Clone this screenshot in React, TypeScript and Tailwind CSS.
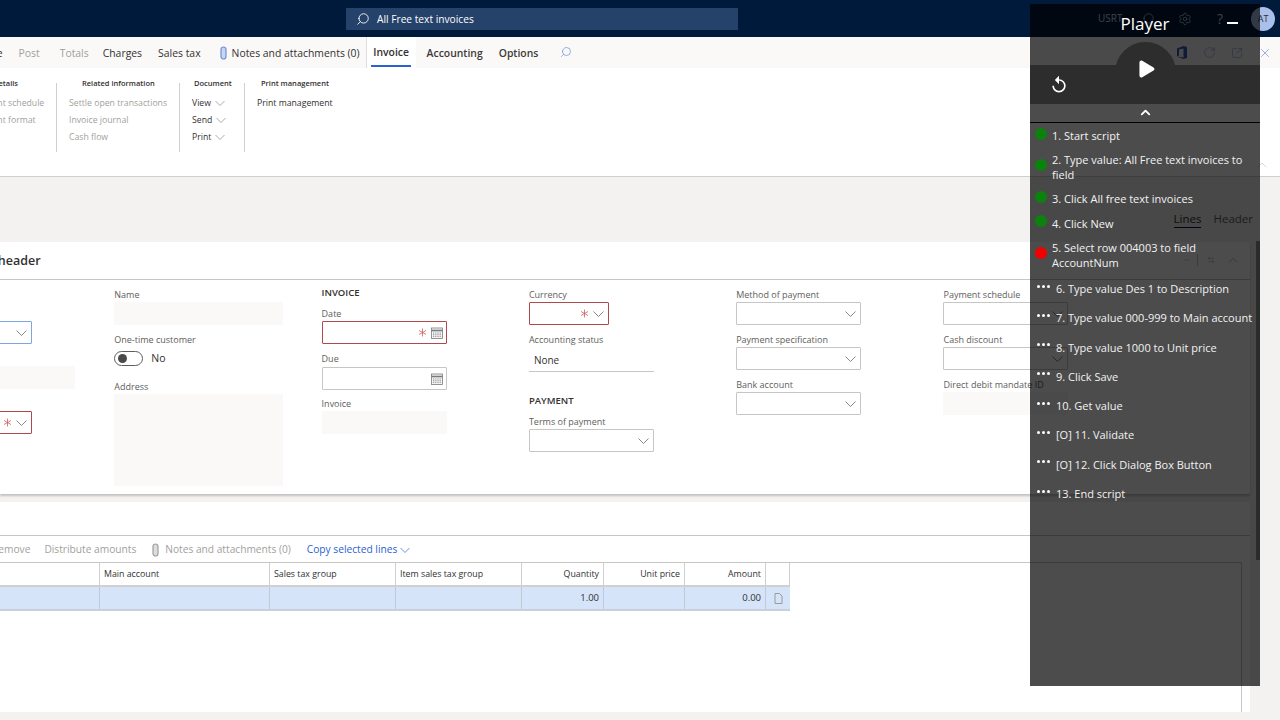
import { ArrowLeftRight, ChevronUp, Minus, Play, RotateCw, Search, Settings, SquareArrowOutUpRight, X } from "lucide-react";
import { MdReplay } from "react-icons/md";
import type { ReactNode } from "react";

const Chevron = ({ className = "text-[#6b6a68]" }: { className?: string }) => (
    <svg width="11" height="6" viewBox="0 0 11 6" fill="none" stroke="currentColor" strokeWidth="0.8" className={className}>
        <path d="M0.5 0.5l5 5 5-5" />
    </svg>
);

const SmallChevron = ({ className = "text-[#8a8886]" }: { className?: string }) => (
    <svg width="10" height="6" viewBox="0 0 10 6" fill="none" stroke="currentColor" strokeWidth="0.7" className={className}>
        <path d="M0.5 1l4.5 4.5L9.5 1" />
    </svg>
);

const Star = () => (
    <svg width="9" height="9" viewBox="0 0 9 9" fill="none" stroke="#c9605c" strokeWidth="0.8">
        <path d="M4.5 0.5v8M1 2.5l7 4M8 2.5l-7 4" />
    </svg>
);

const Clip = ({ color }: { color: string }) => (
    <svg width="7" height="14" viewBox="0 0 7 14" fill="none" stroke={color} strokeWidth="1.2">
        <rect x="1" y="1" width="5" height="12" rx="2.5" fill={color} fillOpacity="0.35" />
    </svg>
);

const CalendarIcon = () => (
    <svg width="12" height="12" viewBox="0 0 12 12" fill="none" stroke="#7a7a7a" strokeWidth="0.8">
        <rect x="0.5" y="1" width="11" height="10.5" fill="#f3f3f3" />
        <path d="M0.5 3.5h11" strokeWidth="1.6" />
        <path d="M2 6h8M2 7.7h8M2 9.4h8" strokeDasharray="1 0.8" />
    </svg>
);

const Label = ({ children }: { children?: ReactNode }) => (
    <div className="h-[15px] text-[9px] leading-[15px] whitespace-nowrap text-[#605e5c]">{children}</div>
);

const Heading = ({ children }: { children: ReactNode }) => (
    <div className="h-[19px] text-[9.5px] leading-[12px] font-semibold text-[#323130]">{children}</div>
);

const SelectBox = ({ required, width = "w-[125px]" }: { required?: boolean; width?: string }) => (
    <div className={`mb-[7px] flex h-[23px] ${width} items-center justify-end gap-[4px] rounded-[1px] border pr-[4px] ${required ? "border-[#b04a4a]" : "border-[#c8c6c4]"}`}>
        {required && <Star />}
        <Chevron />
    </div>
);

const DateBox = ({ required }: { required?: boolean }) => (
    <div className={`flex h-[23px] w-[125px] items-center justify-end gap-[4px] rounded-[1px] border pr-[3px] ${required ? "mb-[7px] border-[#b04a4a]" : "mt-[1px] mb-[6px] border-[#c8c6c4]"}`}>
        {required && <Star />}
        <CalendarIcon />
    </div>
);

const ReadOnly = ({ className }: { className: string }) => <div className={`mb-[7px] bg-[#faf9f8] ${className}`} />;

const RibbonGroup = ({ title, titleClass, children, className }: { title: string; titleClass?: string; children: ReactNode; className: string }) => (
    <div className={`h-[69px] shrink-0 border-r border-[#d2d0ce] ${className}`}>
        <div className={`-mt-[5px] h-[18px] text-[7.5px] leading-[10px] font-semibold whitespace-nowrap text-[#323130] ${titleClass ?? ""}`}>{title}</div>
        <div className="flex flex-col gap-[3px] text-[8.7px] leading-[14px] whitespace-nowrap">{children}</div>
    </div>
);

const columns = [
    { title: "Description", width: "w-[100px]", right: false },
    { title: "Main account", width: "w-[170px]", right: false },
    { title: "Sales tax group", width: "w-[126px]", right: false },
    { title: "Item sales tax group", width: "w-[126px]", right: false },
    { title: "Quantity", width: "w-[82px]", right: true, value: "1.00" },
    { title: "Unit price", width: "w-[81px]", right: true },
    { title: "Amount", width: "w-[81px]", right: true, value: "0.00" },
];

const doneSteps = [
    { text: "1. Start script", color: "bg-[#0b820b]" },
    { text: "2. Type value: All Free text invoices to field", color: "bg-[#0b820b]" },
    { text: "3. Click All free text invoices", color: "bg-[#0b820b]" },
    { text: "4. Click New", color: "bg-[#0b820b]" },
    { text: "5. Select row 004003 to field AccountNum", color: "bg-[#f00000]" },
];

const pendingSteps = [
    "6. Type value Des 1 to Description",
    "7. Type value 000-999 to Main account",
    "8. Type value 1000 to Unit price",
    "9. Click Save",
    "10. Get value",
    "[O] 11. Validate",
    "[O] 12. Click Dialog Box Button",
    "13. End script",
];

const Player = () => (
    <div className="absolute top-[4px] left-[1030px] flex h-[682px] w-[230px] flex-col bg-[rgba(0,0,0,0.7)] text-white">
        {/* title */}
        <div className="relative h-[38px] shrink-0 pt-[7px] text-center text-[17px] leading-[26px]">
            Player
            <div className="absolute top-[18px] left-[197px] h-[2px] w-[11px] bg-white" />
        </div>

        {/* transport */}
        <div className="relative mt-[23px] flex h-[39px] shrink-0 items-center bg-[#2d2d2d] pl-[19px]">
            <div className="absolute top-[-23px] left-[85px] flex h-[61px] w-[61px] items-start justify-center rounded-full bg-[#2d2d2d] pt-[18px]">
                <Play size={18} fill="white" strokeWidth={0} className="scale-[1.25]" />
            </div>
            <MdReplay size={20} className="relative mt-[1px]" />
        </div>
        <div className="flex h-[19px] shrink-0 items-center justify-center border-b border-black pb-[1px]">
            <ChevronUp size={15} strokeWidth={3} />
        </div>

        {/* steps */}
        <div className="flex flex-col pt-[5px] pr-[4px] text-[11px] leading-[15px] text-[#f2f2f2]">
            <div className="flex flex-col gap-[9.5px]">
                {doneSteps.map((step) => (
                    <div key={step.text} className="flex items-center pl-[5px] first:-mb-[1px]">
                        <div className={`h-[12px] w-[12px] shrink-0 -translate-y-[2px] rounded-full ${step.color}`} />
                        <div className="ml-[5px]">{step.text}</div>
                    </div>
                ))}
            </div>
            <div className="mt-[11px] flex flex-col gap-[14.3px]">
                {pendingSteps.map((step) => (
                    <div key={step} className="flex pl-[7px] whitespace-nowrap">
                        <div className="mt-[2px] flex h-[6px] w-[13px] shrink-0 items-center gap-[2px]">
                            <i className="h-[3px] w-[3px] rounded-full bg-white" />
                            <i className="h-[3px] w-[3px] rounded-full bg-white" />
                            <i className="h-[3px] w-[3px] rounded-full bg-white" />
                        </div>
                        <div className="ml-[6px]">{step}</div>
                    </div>
                ))}
            </div>
        </div>

        {/* scrollbar */}
        <div className="absolute top-[237px] right-0 h-[319px] w-[4px] bg-[#2b2b2b]" />
    </div>
);

export default function App() {
    return (
        <div className="relative flex h-[720px] w-[1280px] flex-col overflow-hidden bg-[#f3f2f1] font-['Open_Sans','Noto_Sans',sans-serif] text-[#323130]">
            {/* top bar */}
            <div className="flex h-[37px] shrink-0 items-center bg-[#001a3b] pl-[346px] text-white">
                <div className="mt-[8px] flex h-[22px] w-[392px] items-center gap-[7px] self-start bg-[#25426a] pl-[10px] text-[10.2px]">
                    <Search size={14} strokeWidth={1.5} className="-scale-x-100" />
                    <span className="pt-[1px]">All Free text invoices</span>
                </div>
                <div className="ml-[360px] flex items-center text-[#cfd6e2]">
                    <span className="w-[42px] text-[10px]">USRT</span>
                    <Search size={14} strokeWidth={1.2} className="ml-[1px] -scale-x-100" />
                    <Settings size={14} strokeWidth={1.2} className="ml-[23px]" />
                    <span className="ml-[25px] text-[14px]">?</span>
                    <div className="ml-[28px] flex h-[24px] w-[24px] items-center justify-center rounded-full bg-[#a9c0ea] text-[9px] text-[#323130]">AT</div>
                </div>
            </div>

            {/* action tabs */}
            <div className="flex h-[31px] shrink-0 items-stretch bg-[#faf9f8] text-[10.4px]">
                <div className="-ml-[20px] flex items-center gap-[16px] pt-[2px] whitespace-nowrap">
                    <span>Save</span>
                    <span className="text-[#a19f9d]">Post</span>
                    <span className="ml-[4px] text-[#a19f9d]">Totals</span>
                    <span className="-ml-[2px]">Charges</span>
                    <span>Sales tax</span>
                    <span className="ml-[3px] flex items-center gap-[5px]">
                        <Clip color="#6f8fd8" />
                        Notes and attachments (0)
                    </span>
                </div>
                <div className="ml-[6px] flex w-[50px] flex-col items-center border-l border-[#e1dfdd] bg-white">
                    <div className="flex flex-1 items-center pt-[3px] font-semibold">Invoice</div>
                    <div className="mb-[1px] h-[2px] w-[40px] bg-[#2a62d4]" />
                </div>
                <div className="ml-[11px] flex items-center gap-[16px] pt-[2px] font-semibold text-[#3b3a39]">
                    <span>Accounting</span>
                    <span>Options</span>
                </div>
                <Search size={12} strokeWidth={1.4} className="mt-[9px] ml-[22px] -scale-x-100 text-[#6f8fd8]" />
                <div className="ml-[576px] flex items-center text-[#5f6f8f]">
                    <svg width="10" height="8" viewBox="0 0 10 8" fill="#555"><path d="M3 0l3 4-3 4-3-4zM7 0l3 4-3 4-3-4z" /></svg>
                    <svg width="12" height="13" viewBox="0 0 12 13" className="ml-[18px]"><path d="M1 2.5L7.5 0 11 1v11l-3.5 1L1 10.5l6.5 1V2.5L3 3.5v6l-2 1z" fill="#2f5fb8" /></svg>
                    <RotateCw size={13} strokeWidth={1} className="ml-[15px] text-[#6f8fd8]" />
                    <SquareArrowOutUpRight size={12} strokeWidth={1} className="ml-[15px] text-[#6f8fd8]" />
                    <X size={14} strokeWidth={1.2} className="ml-[15px] text-[#6f8fd8]" />
                </div>
            </div>

            {/* ribbon */}
            <div className="relative flex h-[109px] shrink-0 border-b border-[#d2d0ce] bg-white pt-[15px]">
                <RibbonGroup title="Details" titleClass="-ml-[7px]" className="w-[57px]">
                    <span className="-ml-[30px] text-[#a19f9d]">Payment schedule</span>
                    <span className="-ml-[30px] text-[#a19f9d]">Payment format</span>
                </RibbonGroup>
                <RibbonGroup title="Related information" titleClass="pl-[13px]" className="w-[123px] pl-[12px]">
                    <span className="text-[#a19f9d]">Settle open transactions</span>
                    <span className="text-[#a19f9d]">Invoice journal</span>
                    <span className="text-[#a19f9d]">Cash flow</span>
                </RibbonGroup>
                <RibbonGroup title="Document" titleClass="pl-[2px]" className="w-[65px] pl-[12px]">
                    {["View", "Send", "Print"].map((item) => (
                        <span key={item} className="flex items-center gap-[4px]">
                            {item}
                            <SmallChevron />
                        </span>
                    ))}
                </RibbonGroup>
                <div className="pl-[12px]">
                    <div className="-mt-[5px] h-[18px] pl-[4px] text-[7.5px] leading-[10px] font-semibold whitespace-nowrap">Print management</div>
                    <div className="text-[8.7px] leading-[14px]">Print management</div>
                </div>
                <ChevronUp size={16} strokeWidth={1} className="absolute top-[89px] right-[10px] text-[#c8c6c4]" />
            </div>

            {/* gray band with Lines / Header tabs */}
            <div className="flex h-[65px] w-[1253px] shrink-0 justify-end gap-[12px] pt-[34px] text-[11.5px] leading-[16px]">
                <span className="h-[17px] border-b border-[#001a3b]">Lines</span>
                <span className="text-[#605e5c]">Header</span>
            </div>

            {/* header card */}
            <div className="h-[252px] w-[1250px] shrink-0 overflow-hidden bg-white shadow-[0_2px_2px_rgba(0,0,0,0.2)]">
                <div className="relative flex h-[38px] items-center border-b border-[#c8c6c4] text-[12.5px] font-semibold">
                    <span className="-ml-[37px] pt-[1px]">Lines header</span>
                    <div className="absolute top-[11px] right-[10px] flex items-center text-[#8a8886]">
                        <Minus size={8} strokeWidth={1.2} />
                        <div className="ml-[6px] h-[12px] w-px bg-[#c8c6c4]" />
                        <ArrowLeftRight size={8} strokeWidth={1.2} className="ml-[9px]" />
                        <ChevronUp size={14} strokeWidth={1} className="ml-[11px]" />
                    </div>
                </div>

                {/* form columns */}
                <div className="-ml-[93px] flex pt-[7px]">
                    <div className="w-[207.3px] shrink-0">
                        <div className="h-[19px]" />
                        <Label />
                        <div className="mb-[7px] flex h-[23px] w-[125px] items-center justify-end rounded-[1px] border border-[#7fa6e0] pr-[4px]">
                            <Chevron />
                        </div>
                        <Label />
                        <ReadOnly className="h-[23px] w-[168px]" />
                        <Label />
                        <SelectBox required />
                    </div>
                    <div className="w-[207.3px] shrink-0">
                        <Label>Name</Label>
                        <ReadOnly className="h-[23px] w-[169px]" />
                        <Label>One-time customer</Label>
                        <div className="mt-[3px] mb-[12px] flex h-[17px] items-center gap-[8px] text-[10.5px]">
                            <div className="flex h-[15px] w-[29px] items-center rounded-full border border-[#605e5c] pl-[3px]">
                                <div className="h-[9px] w-[9px] rounded-full bg-[#4a4a4a]" />
                            </div>
                            No
                        </div>
                        <Label>Address</Label>
                        <ReadOnly className="h-[92px] w-[169px]" />
                    </div>
                    <div className="w-[207.3px] shrink-0">
                        <Heading>INVOICE</Heading>
                        <Label>Date</Label>
                        <DateBox required />
                        <Label>Due</Label>
                        <DateBox />
                        <Label>Invoice</Label>
                        <ReadOnly className="h-[23px] w-[125px]" />
                    </div>
                    <div className="w-[207.3px] shrink-0">
                        <Label>Currency</Label>
                        <SelectBox required width="w-[80px]" />
                        <Label>Accounting status</Label>
                        <div className="mb-[23px] flex h-[25px] w-[125px] items-center border-b border-[#c8c6c4] pt-[3px] pl-[5px] text-[10px]">None</div>
                        <Heading>PAYMENT</Heading>
                        <Label>Terms of payment</Label>
                        <SelectBox />
                    </div>
                    <div className="w-[207.3px] shrink-0">
                        <Label>Method of payment</Label>
                        <SelectBox />
                        <Label>Payment specification</Label>
                        <SelectBox />
                        <Label>Bank account</Label>
                        <SelectBox />
                    </div>
                    <div className="w-[207.3px] shrink-0">
                        <Label>Payment schedule</Label>
                        <SelectBox />
                        <Label>Cash discount</Label>
                        <SelectBox />
                        <Label>Direct debit mandate ID</Label>
                        <ReadOnly className="h-[23px] w-[125px]" />
                    </div>
                </div>
            </div>

            {/* lines */}
            <div className="mt-[8px] flex min-h-0 w-[1250px] flex-1 flex-col bg-white">
                <div className="h-[33px] shrink-0" />
                <div className="flex h-[27px] shrink-0 items-center border-t border-[#c8c6c4] pt-[1px] text-[10.2px] whitespace-nowrap text-[#a19f9d]">
                    <span className="-ml-[8px]">Remove</span>
                    <span className="ml-[14px]">Distribute amounts</span>
                    <span className="mr-[6px] ml-[16px]"><Clip color="#a19f9d" /></span>
                    <span>Notes and attachments (0)</span>
                    <span className="ml-[16px] text-[#2a62d4]">Copy selected lines</span>
                    <SmallChevron className="ml-[3px] text-[#2a62d4]" />
                </div>
                <div className="mr-[8px] flex flex-1 flex-col border-t border-r border-[#c8c6c4]">
                    <div className="flex h-[24px] w-[790px] shrink-0 border-b-2 border-[#d2d0ce] text-[8.8px]">
                        {columns.map((col) => (
                            <div key={col.title} className={`${col.width} flex items-center border-r border-[#d2d0ce] px-[4px] pt-[2px] ${col.right ? "justify-end" : ""} ${col.title === "Description" ? "text-transparent" : ""}`}>
                                {col.title}
                            </div>
                        ))}
                        <div className="w-[24px] border-r border-[#d2d0ce]" />
                    </div>
                    <div className="flex h-[24px] w-[790px] shrink-0 border-b-2 border-[#c8d0dc] bg-[#d6e4fa] text-[9.5px]">
                        {columns.map((col) => (
                            <div key={col.title} className={`${col.width} flex items-center border-r border-[#c1c9d6] px-[4px] pt-[1px] ${col.right ? "justify-end" : ""}`}>
                                {col.value}
                            </div>
                        ))}
                        <div className="flex w-[24px] items-center justify-center">
                            <svg width="9" height="11" viewBox="0 0 9 11" fill="none" stroke="#8a8886" strokeWidth="0.8">
                                <path d="M1 0.5h4.5L8 3v7.5H1z" />
                            </svg>
                        </div>
                    </div>
                </div>
                <div className="h-[8px] shrink-0 bg-[#f3f2f1]" />
            </div>

            <Player />
        </div>
    );
}
